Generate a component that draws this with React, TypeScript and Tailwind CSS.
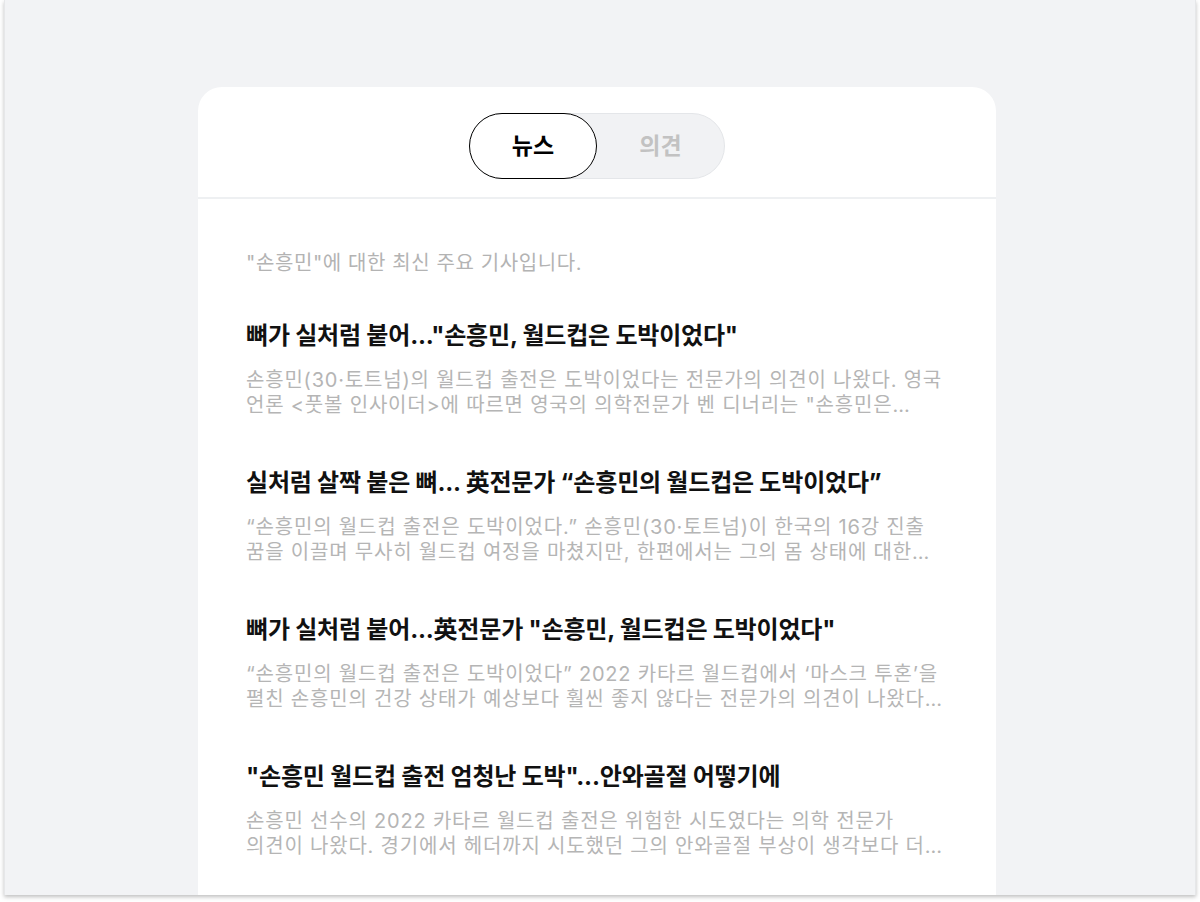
import React, { useState } from 'react';

interface Article {
    id: number;
    title: string;
    summary: string;
}

const articles: Article[] = [
    {
        id: 1,
        title: '뼈가 실처럼 붙어..."손흥민, 월드컵은 도박이었다"',
        summary:
            '손흥민(30·토트넘)의 월드컵 출전은 도박이었다는 전문가의 의견이 나왔다. 영국 언론 <풋볼 인사이더>에 따르면 영국의 의학전문가 벤 디너리는 "손흥민은 가면을 쓰고 경기에 나섰지만 부상 부위가 완전히 회복되지 않은 상태였다"고 밝혔다.',
    },
    {
        id: 2,
        title: '실처럼 살짝 붙은 뼈... 英전문가 “손흥민의 월드컵은 도박이었다”',
        summary:
            '“손흥민의 월드컵 출전은 도박이었다.” 손흥민(30·토트넘)이 한국의 16강 진출 꿈을 이끌며 무사히 월드컵 여정을 마쳤지만, 한편에서는 그의 몸 상태에 대한 우려의 목소리가 나오고 있다.',
    },
    {
        id: 3,
        title: '뼈가 실처럼 붙어...英전문가 "손흥민, 월드컵은 도박이었다"',
        summary:
            '“손흥민의 월드컵 출전은 도박이었다” 2022 카타르 월드컵에서 ‘마스크 투혼’을 펼친 손흥민의 건강 상태가 예상보다 훨씬 좋지 않다는 전문가의 의견이 나왔다. 영국 매체는 이렇게 전했다.',
    },
    {
        id: 4,
        title: '"손흥민 월드컵 출전 엄청난 도박"...안와골절 어떻기에',
        summary:
            '손흥민 선수의 2022 카타르 월드컵 출전은 위험한 시도였다는 의학 전문가 의견이 나왔다. 경기에서 헤더까지 시도했던 그의 안와골절 부상이 생각보다 더 심각했다는 것이다.',
    },
];

export default function App() {
    const [tab, setTab] = useState<'news' | 'opinion'>('news');

    return (
        <div
            className="w-[1200px] h-[902px] bg-white px-[4px] pb-[7px] overflow-hidden"
            style={{ fontFamily: 'Inter, "Noto Sans CJK KR", sans-serif' }}
        >
            <div className="h-full bg-[#f2f3f5] shadow-[0_2px_4px_rgba(0,0,0,0.25)] border-l border-r border-[#e6e7e9] pt-[87px] overflow-hidden">
                <div className="ml-[193px] w-[798px] bg-white rounded-t-[24px] min-h-full">
                    {/* Tab toggle */}
                    <div className="h-[112px] pt-[26px] flex justify-center border-b-2 border-[#eef0f2]">
                        <div className="h-[66px] w-[256px] rounded-full bg-[#f1f2f4] border border-[#e4e6e9] flex">
                            <button
                                onClick={() => setTab('news')}
                                className={
                                    tab === 'news'
                                        ? 'w-[128px] -ml-px -my-px h-[66px] rounded-full bg-white border-[1.5px] border-black text-[23px] font-bold text-black'
                                        : 'flex-1 text-[23px] font-bold text-[#c2c2c2]'
                                }
                            >
                                뉴스
                            </button>
                            <button
                                onClick={() => setTab('opinion')}
                                className={
                                    tab === 'opinion'
                                        ? 'w-[128px] -mr-px -my-px h-[66px] rounded-full bg-white border-[1.5px] border-black text-[23px] font-bold text-black'
                                        : 'flex-1 text-[23px] font-bold text-[#c2c2c2]'
                                }
                            >
                                의견
                            </button>
                        </div>
                    </div>

                    {/* Article list */}
                    <div className="px-[48px] pt-[51px] break-keep">
                        <p className="text-[20px] leading-[27px] text-[#b3b3b3] tracking-[0.6px]">"손흥민"에 대한 최신 주요 기사입니다.</p>
                        <div className="mt-[44px] flex flex-col gap-[50px]">
                            {articles.map((a) => (
                                <div key={a.id}>
                                    <h2 className="text-[24px] leading-[30px] font-bold text-[#111] tracking-[-0.2px]">{a.title}</h2>
                                    <p className="mt-[17px] text-[20px] leading-[25px] text-[#b5b5b5] tracking-[0.8px] line-clamp-2">{a.summary}</p>
                                </div>
                            ))}
                        </div>
                    </div>
                </div>
            </div>
        </div>
    );
}
